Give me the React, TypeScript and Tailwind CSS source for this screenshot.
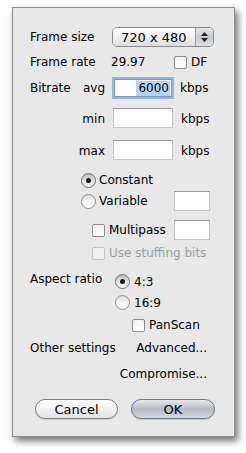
import React from "react";

function Checkbox({ disabled = false }: { disabled?: boolean }) {
  return (
    <span
      className={
        "inline-block w-[13px] h-[13px] rounded-[2px] border shrink-0 " +
        (disabled
          ? "border-[#c4c4c4] bg-[#f0f0f0]"
          : "border-[#8c8c8c] bg-gradient-to-b from-[#f2f2f2] to-white")
      }
    />
  );
}

function Radio({ on = false }: { on?: boolean }) {
  return (
    <span
      className={
        "inline-flex items-center justify-center w-[15px] h-[15px] rounded-full border shrink-0 " +
        (on
          ? "border-[#6f6f6f] bg-gradient-to-b from-[#bdbdbd] via-[#e4e4e4] to-[#f8f8f8]"
          : "border-[#8c8c8c] bg-gradient-to-b from-[#dcdcdc] via-[#f4f4f4] to-white")
      }
    >
      {on && <span className="block w-[5px] h-[5px] rounded-full bg-[#1a1a1a]" />}
    </span>
  );
}

function Field({ w = "w-[60px]" }: { w?: string }) {
  return (
    <span
      className={
        "inline-block h-[20px] bg-white border border-t-[#9a9a9a] border-[#c6c6c6] shrink-0 " + w
      }
    />
  );
}

export default function App() {
  return (
    <div
      className="w-[246px] h-[453px] bg-white pl-[12px] pt-[7px] text-[12px] text-black leading-none"
      style={{ fontFamily: '"DejaVu Sans", sans-serif' }}
    >
      <div className="w-[223px] h-[430px] border border-[#8e8e8e] bg-[#e8e8e8] shadow-[3px_4px_7px_rgba(0,0,0,0.55)] pl-[17px] pt-[19px] flex flex-col">
        {/* frame size */}
        <div className="flex items-center h-[20px]">
          <span className="w-[82px]">Frame size</span>
          <div className="flex h-[20px] w-[102px] rounded-[5px] border border-[#8a8a8a] overflow-hidden">
            <div className="flex-1 flex items-center pl-[8px] text-[13px] bg-gradient-to-b from-white via-[#f1f1f1] to-[#dcdcdc]">
              720 x 480
            </div>
            <div className="w-[18px] flex flex-col items-center justify-center gap-[2px] border-l border-[#9a9a9a] bg-gradient-to-b from-[#e6e9ee] via-[#c3c8d1] to-[#dde1e7]">
              <svg width="7" height="4" viewBox="0 0 7 4">
                <path d="M3.5 0 L7 4 L0 4 Z" fill="#222" />
              </svg>
              <svg width="7" height="4" viewBox="0 0 7 4">
                <path d="M0 0 L7 0 L3.5 4 Z" fill="#222" />
              </svg>
            </div>
          </div>
        </div>

        {/* frame rate */}
        <div className="flex items-center h-[14px] mt-[8px]">
          <span className="w-[81px]">Frame rate</span>
          <span className="w-[63px]">29.97</span>
          <Checkbox />
          <span className="ml-[4px]">DF</span>
        </div>

        {/* bitrate avg */}
        <div className="flex items-center h-[22px] mt-[8px]">
          <div className="w-[75px] flex">
            <span>Bitrate</span>
            <span className="ml-auto">avg</span>
          </div>
          <span className="ml-[9px] flex items-center justify-end w-[58px] h-[18px] bg-white border border-[#7d93b8] shadow-[0_0_0_2px_#92b4e6] pr-[1px]">
            <span className="bg-[#b4d3fb] h-[15px] flex items-center pl-[2px] pr-[1px]">6000</span>
          </span>
          <span className="ml-[8px]">kbps</span>
        </div>

        {/* min */}
        <div className="flex items-center h-[20px] mt-[10px]">
          <span className="w-[75px] text-right">min</span>
          <span className="ml-[8px]">
            <Field />
          </span>
          <span className="ml-[8px]">kbps</span>
        </div>

        {/* max */}
        <div className="flex items-center h-[20px] mt-[12px]">
          <span className="w-[75px] text-right">max</span>
          <span className="ml-[8px]">
            <Field />
          </span>
          <span className="ml-[8px]">kbps</span>
        </div>

        {/* constant */}
        <div className="flex items-center h-[16px] mt-[11px] pl-[51px]">
          <Radio on />
          <span className="ml-[3px]">Constant</span>
        </div>

        {/* variable */}
        <div className="flex items-center h-[20px] mt-[3px] pl-[51px]">
          <Radio />
          <span className="ml-[3px] w-[75px]">Variable</span>
          <Field w="w-[36px]" />
        </div>

        {/* multipass */}
        <div className="flex items-center h-[20px] mt-[9px] pl-[62px]">
          <Checkbox />
          <span className="ml-[4px] w-[65px]">Multipass</span>
          <Field w="w-[36px]" />
        </div>

        {/* stuffing */}
        <div className="flex items-center h-[14px] mt-[6px] pl-[62px] text-[#9c9c9c]">
          <Checkbox disabled />
          <span className="ml-[4px]">Use stuffing bits</span>
        </div>

        {/* aspect ratio */}
        <div className="flex mt-[10px] h-[42px]">
          <span className="w-[85px] pt-[3px]">Aspect ratio</span>
          <div className="flex flex-col gap-[6px] pt-[4px]">
            <div className="flex items-center">
              <Radio on />
              <span className="ml-[4px]">4:3</span>
            </div>
            <div className="flex items-center">
              <Radio />
              <span className="ml-[4px]">16:9</span>
            </div>
          </div>
        </div>

        {/* panscan */}
        <div className="flex items-center h-[14px] mt-[6px] pl-[102px]">
          <Checkbox />
          <span className="ml-[4px]">PanScan</span>
        </div>

        {/* other settings */}
        <div className="flex items-center h-[14px] mt-[9px] w-[177px]">
          <span>Other settings</span>
          <span className="ml-auto">Advanced...</span>
        </div>
        <div className="flex items-center justify-end h-[14px] mt-[12px] w-[177px]">
          <span>Compromise...</span>
        </div>

        {/* buttons */}
        <div className="flex mt-[18px] pl-[5px] gap-[13px]">
          <button className="w-[83px] h-[20px] rounded-full border border-[#7e7e7e] bg-gradient-to-b from-white via-[#f2f2f2] to-[#e2e2e2] text-[13px] shadow-[0_1px_1px_rgba(0,0,0,0.15)]">
            Cancel
          </button>
          <button className="w-[84px] h-[20px] rounded-full border border-[#6f7785] bg-gradient-to-b from-[#e6e9ee] via-[#b3bbc7] to-[#d3d8e0] text-[13px] shadow-[0_1px_1px_rgba(0,0,0,0.15)]">
            OK
          </button>
        </div>
      </div>
    </div>
  );
}
